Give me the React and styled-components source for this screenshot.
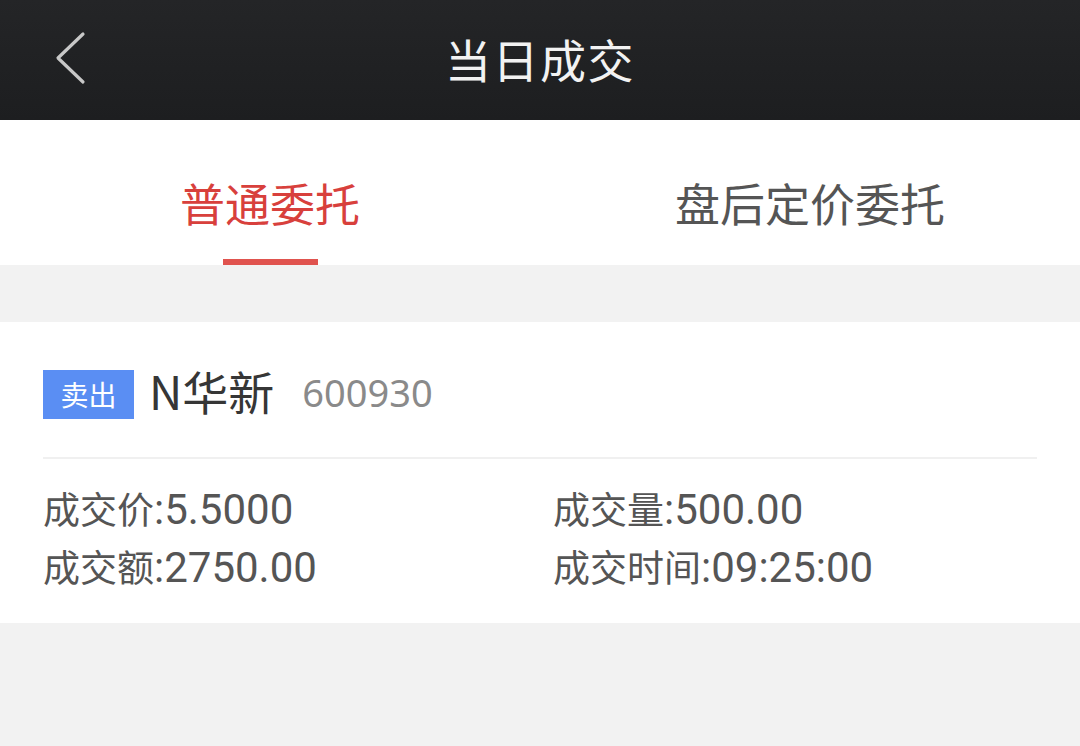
import React, { useState } from "react";
import styled, { createGlobalStyle } from "styled-components";

const GlobalStyle = createGlobalStyle`
  html, body {
    margin: 0;
    padding: 0;
    background: #f2f2f2;
    font-family: "Noto Sans CJK SC", "Noto Sans", sans-serif;
  }
`;

const Page = styled.div`
  width: 1080px;
  height: 746px;
  background: #f2f2f2;
  overflow: hidden;
`;

const Header = styled.header`
  height: 120px;
  background: linear-gradient(#242527, #1d1e20);
  display: flex;
  align-items: center;
  justify-content: center;
  position: relative;
`;

const BackButton = styled.button`
  position: absolute;
  left: 50px;
  top: 28px;
  width: 44px;
  height: 60px;
  border: none;
  background: none;
  padding: 0;
  cursor: pointer;
`;

const Title = styled.h1`
  margin: 0 0 4px;
  color: #f2f2f2;
  font-size: 46px;
  font-weight: 400;
  letter-spacing: 1.5px;
`;

const Tabs = styled.nav`
  height: 145px;
  background: #fff;
  display: flex;
`;

const Tab = styled.div`
  flex: 1;
  display: flex;
  flex-direction: column;
  align-items: center;
  justify-content: flex-end;
  font-size: 45px;
  color: ${(p) => (p.$active ? "#d8403c" : "#555")};
  cursor: pointer;
`;

const TabLabel = styled.span`
  line-height: 1;
  margin-bottom: 34px;
`;

const Underline = styled.div`
  width: 95px;
  height: 6px;
  background: ${(p) => (p.$active ? "#e0534e" : "transparent")};
`;

const Card = styled.section`
  margin-top: 57px;
  background: #fff;
  padding: 0 43px;
  height: 301px;
  box-sizing: border-box;
`;

const StockRow = styled.div`
  display: flex;
  align-items: center;
  height: 135px;
  border-bottom: 2px solid #f0f0f0;
`;

const SideTag = styled.span`
  background: #5a8ef3;
  color: #fff;
  font-size: 28px;
  width: 91px;
  height: 49px;
  display: flex;
  align-items: center;
  justify-content: center;
  margin: 9px 15px 0 0;
`;

const StockName = styled.span`
  font-size: 46px;
  color: #363636;
  margin-right: 28px;
`;

const StockCode = styled.span`
  font-size: 38px;
  color: #8a8a8a;
  font-family: "Noto Sans", sans-serif;
  margin-top: 4px;
`;

const Details = styled.div`
  display: grid;
  grid-template-columns: 510px 1fr;
  row-gap: 14px;
  padding-top: 30px;
`;

const Detail = styled.div`
  display: flex;
  align-items: baseline;
  height: 44px;
  color: #555;
  line-height: 1;
  white-space: nowrap;
`;

const Label = styled.span`
  font-size: 37px;
`;

const Value = styled.span`
  font-size: 42px;
  font-family: "Roboto", sans-serif;
`;

const trades = [
  ["成交价", "5.5000"],
  ["成交量", "500.00"],
  ["成交额", "2750.00"],
  ["成交时间", "09:25:00"],
];

export default function App() {
  const [tab, setTab] = useState(0);
  const tabs = ["普通委托", "盘后定价委托"];
  return (
    <Page>
      <GlobalStyle />
      <Header>
        <BackButton aria-label="返回">
          <svg width="44" height="60" viewBox="0 0 44 60">
            <path
              d="M33 6 L8 30 L33 54"
              fill="none"
              stroke="#c8c8c8"
              strokeWidth="3.2"
              strokeLinecap="round"
              strokeLinejoin="round"
            />
          </svg>
        </BackButton>
        <Title>当日成交</Title>
      </Header>
      <Tabs>
        {tabs.map((t, i) => (
          <Tab key={t} $active={tab === i} onClick={() => setTab(i)}>
            <TabLabel>{t}</TabLabel>
            <Underline $active={tab === i} />
          </Tab>
        ))}
      </Tabs>
      <Card>
        <StockRow>
          <SideTag>卖出</SideTag>
          <StockName>N华新</StockName>
          <StockCode>600930</StockCode>
        </StockRow>
        <Details>
          {trades.map(([k, v]) => (
            <Detail key={k}>
              <Label>{k}</Label>
              <Value>:{v}</Value>
            </Detail>
          ))}
        </Details>
      </Card>
    </Page>
  );
}
